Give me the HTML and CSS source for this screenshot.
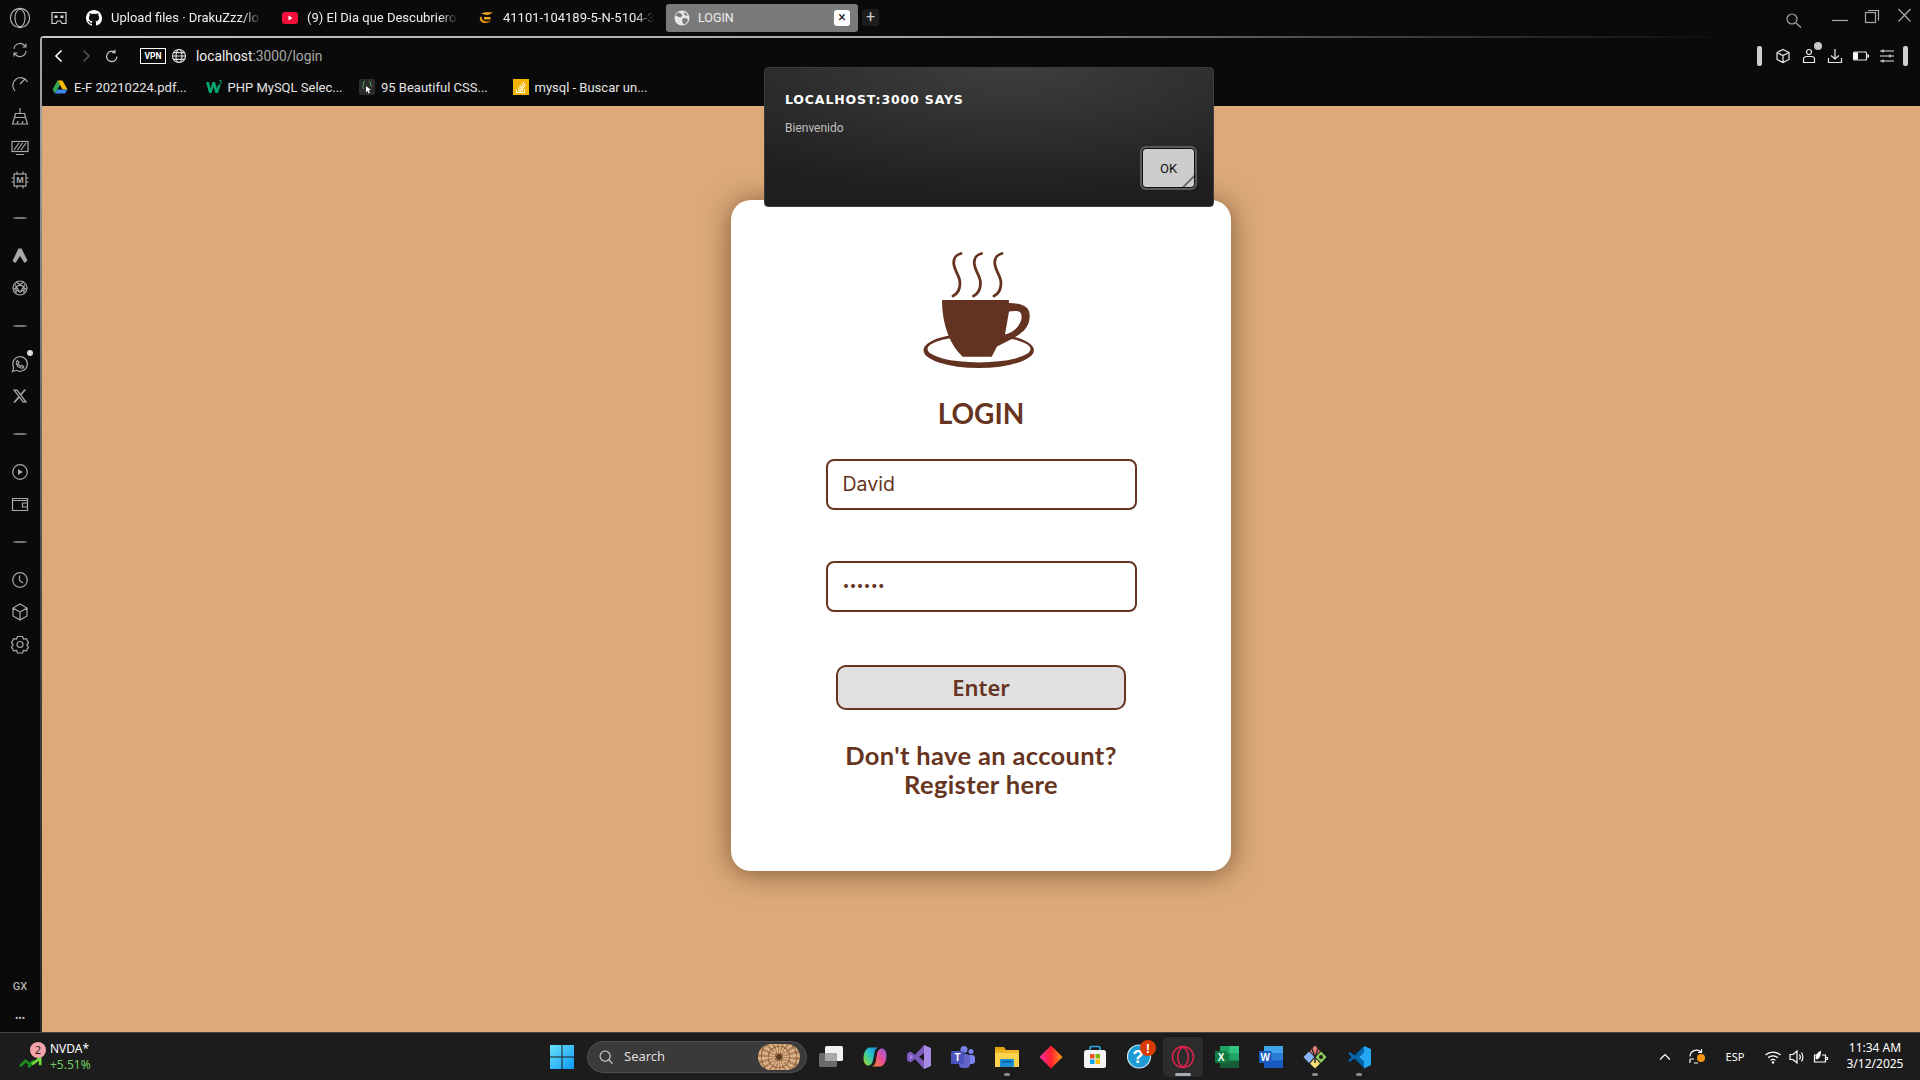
FILE: index.html
```html
<!DOCTYPE html>
<html lang="en">
<head>
<meta charset="utf-8">
<title>LOGIN</title>
<link rel="stylesheet" href="styles.css">
</head>
<body>
<div class="shell">
  <header class="tabstrip">
    <div class="brand"><svg class="i22" viewBox="0 0 24 24"><circle class="ln" cx="12" cy="12" r="10.5"/><ellipse class="ln" cx="12" cy="12" rx="5.5" ry="9.5"/></svg></div>
    <div class="workspace"><svg class="i16" viewBox="0 0 16 16"><path class="ln" d="M1 2.5h14v11h-4l-1.500-2.500h-3l-1.500 2.500h-4z"/><rect class="fl" x="3.500" y="5.500" width="3" height="2.500"/><rect class="fl" x="9.500" y="5.500" width="3" height="2.500"/></svg></div>
    <div class="tabs">
      <div class="tab"><svg class="i16" viewBox="0 0 16 16"><path class="white" d="M8 0C3.580 0 0 3.580 0 8c0 3.540 2.290 6.530 5.470 7.590.4.070.55-.17.55-.38 0-.19-.01-.82-.01-1.490-2.010.37-2.530-.49-2.690-.94-.09-.23-.48-.94-.82-1.130-.28-.15-.68-.52-.01-.53.63-.01 1.080.58 1.230.82.72 1.210 1.870.87 2.330.66.07-.52.28-.87.51-1.070-1.780-.2-3.640-.89-3.640-3.950 0-.87.31-1.590.82-2.150-.08-.2-.36-1.020.08-2.120 0 0 .67-.21 2.200.82.64-.18 1.320-.27 2-.27s1.360.09 2 .27c1.530-1.040 2.200-.82 2.200-.82.44 1.100.16 1.920.08 2.120.51.56.82 1.270.82 2.150 0 3.070-1.870 3.750-3.650 3.950.29.25.54.73.54 1.480 0 1.070-.01 1.930-.01 2.200 0 .21.15.46.55.38A8.013 8.013 0 0016 8c0-4.420-3.580-8-8-8z"/></svg><span class="tab-title">Upload files · DrakuZzz/lo</span></div>
      <div class="tab"><svg class="i16" viewBox="0 0 16 16"><rect x="0" y="2" width="16" height="12" rx="3" fill="#f0103a"/><path class="white" d="M6.500 5.500l4 2.500-4 2.500z"/></svg><span class="tab-title">(9) El Dia que Descubriero</span></div>
      <div class="tab"><svg class="i16" viewBox="0 0 16 16"><path d="M3 3.500c3-1.500 7-1.500 12-1l-5 2.500c-2.500-.5-5-.5-7-1.500z" fill="#f5a623"/><path d="M2 7c-1 4 2 6 5.500 6 2.500 0 4.500-1 5.500-2.500-2.500 1-6 1.500-8-.5-1-1-1.500-2-1-3.500z" fill="#e8900c"/><path d="M6 7h6.500v2.500H6z" fill="#f5a623"/></svg><span class="tab-title">41101-104189-5-N-5104-3</span></div>
      <div class="tab active"><svg class="i16" viewBox="0 0 16 16"><circle cx="8" cy="8" r="7.500" fill="#e8e8e8"/><path d="M4 2.500l3 1 1.500 2-2 2-3-1-2-1zM9 8l4 .5 1 2-3 4-2-1-1-3zM10 2l3 2 .5 2-3-1z" fill="#7a7a7a"/></svg><span class="tab-title plain">LOGIN</span><span class="tab-close">×</span></div>
      <div class="tab-new">+</div>
    </div>
    <div class="winctl">
      <svg class="wc-search" viewBox="0 0 24 36"><circle class="ln" cx="11" cy="19" r="5"/><path class="ln" d="M15 23l5 4.500"/></svg>
      <svg class="wc-min" viewBox="0 0 16 36"><path class="ln" d="M0 20.500h16"/></svg>
      <svg class="wc-max" viewBox="0 0 14 36"><rect class="ln" x=".5" y="12.500" width="10" height="10"/><path class="ln" d="M3 10.500h10.500v10"/></svg>
      <svg class="wc-close" viewBox="0 0 13 36"><path class="ln" d="M.5 9l12 12.500M12.500 9L.5 21.500"/></svg>
    </div>
  </header>

  <nav class="sidebar">
    <div class="sb-slot sb-first"><svg class="i18" viewBox="0 0 18 18"><path class="ln" d="M3 8a6 6 0 0 1 10.500-3.500L15 6M15 2.500V6h-3.500M15 10a6 6 0 0 1-10.500 3.500L3 12M3 15.500V12h3.500"/></svg></div>
    <div class="sb-slot"><svg class="i18" viewBox="0 0 18 18"><path class="ln" d="M4 16A7.800 7.800 0 1 1 16.500 7M9 9l5-5"/></svg></div>
    <div class="sb-slot"><svg class="i18" viewBox="0 0 18 18"><path class="ln" d="M9 1v5M4.500 6.500h9l1 4h-11zM3.500 10.500L1.500 17h15l-2-6.500M6 17l1-3M11 17l1-3"/></svg></div>
    <div class="sb-slot"><svg class="i18" viewBox="0 0 18 18"><rect class="ln" x="1" y="2.500" width="16" height="10"/><path class="ln" d="M3 11l5-7M6.500 11l5-7M10 11l5-7M5 15.500h8"/></svg></div>
    <div class="sb-slot"><svg class="i18" viewBox="0 0 18 18"><rect class="ln" x="3" y="3" width="12" height="12"/><path class="ln" d="M6 .5V3M12 .5V3M6 15v2.500M12 15v2.500M.5 7H3M.5 11H3M15 7h2.500M15 11h2.500"/><text class="chip-m" x="9" y="12.300">M</text></svg></div>
    <div class="sb-dash"></div>
    <div class="sb-slot"><svg class="i18" viewBox="0 0 18 18"><path class="fl" d="M7.500 1.500h3l6 12-3 2.500-4.500-7-4.500 7L1.500 14z"/></svg></div>
    <div class="sb-slot"><svg class="i18" viewBox="0 0 18 18"><circle class="ln" cx="9" cy="9" r="7"/><path class="ln" d="M5 3l8 5v6M13 3l-8 5v6M2.500 9l6.500 4 6.500-4M4 5.500l5 8M14 5.500l-5 8"/></svg></div>
    <div class="sb-dash"></div>
    <div class="sb-slot dotted"><svg class="i18" viewBox="0 0 18 18"><path class="ln" d="M1.500 16.500l1.200-4a7.300 7.300 0 1 1 2.800 2.800z"/><path class="ln" d="M6.500 5.500l1.500 2-1 1c.5 1.200 1.500 2.200 2.800 2.800l1-1 2 1.500c-.5 1.500-2 1.700-3.500 1-2-.8-3.500-2.300-4-4.300-.2-1 .5-2.500 1.200-3z"/></svg></div>
    <div class="sb-slot"><svg class="i16" viewBox="0 0 24 24"><path class="fl" d="M18.244 2.250h3.308l-7.227 8.260 8.502 11.240H16.170l-5.214-6.817L4.990 21.750H1.680l7.730-8.835L1.254 2.250H8.080l4.713 6.231zm-1.161 17.520h1.833L7.084 4.126H5.117z"/></svg></div>
    <div class="sb-dash"></div>
    <div class="sb-slot"><svg class="i18" viewBox="0 0 18 18"><circle class="ln" cx="9" cy="9" r="7.300"/><path class="fl" d="M7 6l5 3-5 3z"/></svg></div>
    <div class="sb-slot"><svg class="i18" viewBox="0 0 18 18"><path class="ln" d="M16.500 5.500v-2h-15v12h15v-3.500M1.500 5.500h15M16.500 8h-5v4h5zM16.500 5.500V8"/></svg></div>
    <div class="sb-dash"></div>
    <div class="sb-slot"><svg class="i18" viewBox="0 0 18 18"><circle class="ln" cx="9" cy="9" r="7.300"/><path class="ln" d="M8.500 4.500v5l3.500 2.500"/></svg></div>
    <div class="sb-slot"><svg class="i18" viewBox="0 0 18 18"><path class="ln" d="M9 1l7 4v8l-7 4-7-4V5zM2 5l7 4 7-4M9 9v8"/></svg></div>
    <div class="sb-slot"><svg class="i18" viewBox="0 0 18 18"><path class="ln" d="M6.500 1.500h5l1 2.500 2.800-.3 2.200 4-1.700 2 1.700 2.500-2.200 3.600-2.800-.3-1 2.500h-5l-1-2.500-2.800.3L.5 12.200l1.700-2.500-1.700-2 2.200-4 2.800.3z"/><circle class="ln" cx="9" cy="9.500" r="3"/></svg></div>
    <div class="sb-push"></div>
    <div class="sb-slot sb-gx">GX</div>
    <div class="sb-slot sb-more">•••</div>
  </nav>

  <div class="frame">
    <div class="toolbar">
      <div class="navrow">
        <span class="nav-btn back"><svg class="i14" viewBox="0 0 14 14"><path class="ln bright" d="M9.500 1.500L4 7l5.500 5.500"/></svg></span>
        <span class="nav-btn fwd"><svg class="i14" viewBox="0 0 14 14"><path class="ln dim" d="M4.500 1.500L10 7l-5.500 5.500"/></svg></span>
        <span class="nav-btn"><svg class="i14" viewBox="0 0 14 14"><path class="ln" d="M12 7.500a5.200 5.200 0 1 1-2-4.200M10 .8v2.800H7.300"/></svg></span>
        <span class="vpn">VPN</span>
        <svg class="i16 globe" viewBox="0 0 16 16"><circle class="ln" cx="8" cy="8" r="6.500"/><ellipse class="ln" cx="8" cy="8" rx="3" ry="6.500"/><path class="ln" d="M1.500 8h13M2.500 4.700h11M2.500 11.300h11"/></svg>
        <span class="url"><span class="url-host">localhost</span>:3000/login</span>
        <div class="tools">
          <span class="pill"></span>
          <span class="tool first"><svg class="i16" viewBox="0 0 16 16"><path class="ln" d="M8 1.500l6 3v7l-6 3-6-3v-7zM2 4.500l6 3 6-3M8 7.500v7"/></svg></span>
          <span class="tool badge-host"><svg class="i16" viewBox="0 0 16 16"><circle class="ln" cx="8" cy="4" r="2.500"/><path class="ln" d="M2.500 14.500V11c0-1.500 1.500-2.500 3-2.500h5c1.500 0 3 1 3 2.500v3.500z"/></svg></span>
          <span class="tool"><svg class="i16" viewBox="0 0 16 16"><path class="ln" d="M8 1v10M4 7.500L8 11l4-3.500M1.500 10v4.500h13V10"/></svg></span>
          <span class="tool"><svg class="i16" viewBox="0 0 16 16"><rect class="ln" x=".5" y="4" width="13" height="8" rx="1"/><rect class="white" x="1" y="4.500" width="4" height="7"/><path class="white" d="M14.500 6.500H16v3h-1.500z"/></svg></span>
          <span class="tool"><svg class="i16" viewBox="0 0 16 16"><path class="ln" d="M1 3h14M1 8h14M1 13h14M4 1.500v3M11 6.500v3M4 11.500v3"/></svg></span>
          <span class="pill last"></span>
        </div>
      </div>
      <div class="marks">
        <div class="mark"><svg class="i16" viewBox="0 0 16 16"><path d="M5.500 1.500h5l5 9h-5z" fill="#fbbc04"/><path d="M5.500 1.500L.5 10.500 3 14.500 8 6z" fill="#34a853"/><path d="M3 14.500h10l2.500-4H5.500z" fill="#4285f4"/></svg><span>E-F 20210224.pdf...</span></div>
        <div class="mark"><svg class="i16" viewBox="0 0 16 16"><path d="M0 3h3l1.500 7L6.500 3h2.500l2 7 1-4h2.500l-2.500 8h-2.500l-2-6.500L5.500 14H3z" fill="#04aa6d"/><path d="M13 1.500h2.500v.6l-1 1c.7.1 1 .5 1 1 0 .7-.6 1-1.300 1L13.200 5" class="wmark"/></svg><span>PHP MySQL Selec...</span></div>
        <div class="mark"><svg class="i16" viewBox="0 0 16 16"><rect width="16" height="16" rx="2" fill="#2b2b2b"/><path d="M6 2.500c-1.500 0-1.500 1-1.500 2.500S4 7 3 7.500c1 .5 1.500 1 1.500 2.500" class="bm-g"/><path d="M10 2.500c1.500 0 1.500 1 1.500 2.500s.5 2 1.500 2.500" class="bm-g"/><path d="M7 7l5 4-2.300.3 1.300 2.700-1.300.5-1.200-2.700L7 13.500z" fill="#fff"/></svg><span>95 Beautiful CSS...</span></div>
        <div class="mark"><svg class="i16" viewBox="0 0 16 16"><rect width="16" height="16" fill="#f4b400"/><path d="M3.500 10.500v3h8v-3M5 11.800h5M5.200 9.800l5 .6M5.800 8l4.800 1.400M6.700 6.200l4.400 2.400M8.300 4.500l3.400 3.200M10.300 3l2 4.400" class="so"/></svg><span>mysql - Buscar un...</span></div>
      </div>
    </div>
    <main class="page">
      <section class="card">
        <svg class="cup" viewBox="1 0 120 120">
          <g class="steam"><path d="M41 3.500C35 5 33 10 34 15C35 22 40 26 40 33C40 39 37 44 33 46"/><path d="M61.500 3.500C55.500 5 53.500 10 54.500 15C55.500 22 60.500 26 60.500 33C60.500 39 57.500 44 53.500 46"/><path d="M82 3.500C76 5 74 10 75 15C76 22 81 26 81 33C81 39 78 44 74 46"/></g>
          <path class="cup-fill" fill-rule="evenodd" d="M3.500 100.300a55.200 17.700 0 1 0 110.400 0a55.200 17.700 0 1 0-110.400 0zM7.500 99a50 13 0 0 0 103 0a51.500 13 0 0 0-103 0z"/>
          <path class="cup-fill" fill-rule="evenodd" d="M22 50H89L88.800 53C95 53 103 54 107 58C111 62 110.500 72 106 78C100 86 88 91 77 96.500L71.700 106.700H42.700C30 95 22 75 22 50zM89 61.500L85 84.500C92 83 97 79 100 73C102.500 68 102 63 99 61.500C96 60.700 92 61 89 61.500z"/>
        </svg>
        <h1 class="title">LOGIN</h1>
        <input class="field first-field" type="text" value="David" aria-label="User">
        <input class="field second-field" type="password" value="secret" aria-label="Password">
        <button class="enter" type="button">Enter</button>
        <a class="register" href="#">Don't have an account?<br>Register here</a>
      </section>
    </main>
  </div>

  <footer class="taskbar">
    <div class="tb-left">
      <div class="stock"><svg class="stock-chart" viewBox="0 0 24 14"><path d="M0 10l6-6 5 4 4-4" class="st-a"/><path d="M9 11l6-6" class="st-a"/><path d="M13 8l9-7v8" class="st-b"/></svg><span class="stock-badge">2</span></div>
      <div class="stock-text"><div class="stock-name">NVDA*</div><div class="stock-val">+5.51%</div></div>
    </div>
    <div class="tb-center">
      <span class="slot"><svg class="i24" viewBox="0 0 24 24"><defs><linearGradient id="win" x1="0" y1="0" x2="1" y2="1"><stop offset="0" stop-color="#6be3fb"/><stop offset="1" stop-color="#0b98f5"/></linearGradient></defs><path fill="url(#win)" d="M0 0h11.500v11.500H0zM12.500 0H24v11.500H12.500zM0 12.500h11.500V24H0zM12.500 12.500H24V24H12.500z"/></svg></span>
      <div class="search"><svg class="i14" viewBox="0 0 16 16"><circle class="ln" cx="7" cy="7" r="5.800"/><path class="ln" d="M11 11l4.500 4.500"/></svg><span class="search-text">Search</span><span class="search-art"></span></div>
      <span class="slot"><svg class="i24" viewBox="0 0 24 24"><rect x="0" y="8" width="18" height="14" rx="1.500" fill="#6a6a6a"/><rect x="6" y="1" width="18" height="15" rx="1.500" fill="#f1f1f1"/><rect x="6" y="8" width="12" height="8" fill="#a8a8a8"/></svg></span>
      <span class="slot"><svg class="i24" viewBox="0 0 24 24"><defs><linearGradient id="cp1" x1="1" y1="0" x2="0" y2="1"><stop offset="0" stop-color="#1f7ff0"/><stop offset=".45" stop-color="#27c4c8"/><stop offset=".8" stop-color="#6fd25a"/><stop offset="1" stop-color="#f8d23a"/></linearGradient><linearGradient id="cp2" x1="1" y1="0" x2="0" y2="1"><stop offset="0" stop-color="#8a5cf0"/><stop offset=".5" stop-color="#ee4f8e"/><stop offset="1" stop-color="#f88a2a"/></linearGradient></defs><path fill="url(#cp1)" d="M7 2.500h8c-2 .5-3 2.500-3.500 5L10 15c-.6 3-2 5.500-4.500 5.500C3 20.500.5 18 .5 13.500.5 8 3 2.500 7 2.500z"/><path fill="url(#cp2)" d="M17 21.500H9c2-.5 3.200-2.500 3.800-5L14 9c.6-3 2-5.500 4.500-5.500 2.500 0 5 2.500 5 7 0 5.500-2.500 11-6.500 11z"/></svg></span>
      <span class="slot"><svg class="i24" viewBox="0 0 24 24"><path fill="#7d5bbd" d="M17 0L8 10 3.500 6.500 0 8.500v7L3.500 17.500 8 14l9 10z"/><path fill="#a98ae6" d="M17 0l7 3v18l-7 3zM3 9.500L6 12l-3 2.500z"/><path fill="#1c1c1c" d="M17 8l-5 4 5 4z"/></svg></span>
      <span class="slot"><svg class="i24" viewBox="0 0 24 24"><circle cx="20" cy="6.500" r="2.500" fill="#7b83eb"/><rect x="15" y="10" width="9" height="9" rx="3" fill="#7b83eb"/><circle cx="13" cy="4.500" r="3.500" fill="#7b83eb"/><rect x="8" y="9" width="11" height="14" rx="4" fill="#6264c9"/><rect x="0" y="6" width="13" height="13" rx="1.500" fill="#4b53bc"/><text class="tb-t" x="6.500" y="16.200">T</text></svg></span>
      <span class="slot running"><svg class="i24" viewBox="0 0 24 24"><path fill="#e0a60e" d="M0 2h9l2 3h13v6H0z"/><rect x="0" y="5" width="24" height="17" fill="#fcd34d"/><path fill="#f0b429" d="M0 5h24v3H0z"/><rect x="5" y="14" width="14" height="8" rx="1" fill="#1b8fd6"/><rect x="7" y="16" width="10" height="1.500" fill="#0a5ea0"/></svg></span>
      <span class="slot"><svg class="i24" viewBox="0 0 24 24"><defs><linearGradient id="dm" x1="0" y1="0" x2="1" y2="0"><stop offset="0" stop-color="#ff2ea6"/><stop offset=".5" stop-color="#ff1f2d"/><stop offset="1" stop-color="#ffa01f"/></linearGradient></defs><path fill="url(#dm)" d="M12 .5l11.500 11.500L12 23.500.5 12z"/></svg></span>
      <span class="slot"><svg class="i24" viewBox="0 0 24 24"><path class="store-h" d="M7 5V3c0-1 1-1.500 2-1.500h6c1 0 2 .5 2 1.500v2"/><rect x="1" y="5" width="22" height="18" rx="2.500" fill="#f4f4f4"/><rect x="7" y="9" width="4.500" height="4.500" fill="#f25022"/><rect x="12.500" y="9" width="4.500" height="4.500" fill="#7fba00"/><rect x="7" y="14.500" width="4.500" height="4.500" fill="#00a4ef"/><rect x="12.500" y="14.500" width="4.500" height="4.500" fill="#ffb900"/></svg></span>
      <span class="slot"><svg class="help" viewBox="0 0 30 30"><circle cx="15" cy="14.500" r="11.500" fill="#1d9ad6" stroke="#cfe8f5" stroke-width="1.200"/><text class="tb-q" x="14" y="21">?</text><circle cx="24" cy="6" r="8" fill="#d83b01"/><text class="tb-ex" x="24" y="10.500">!</text></svg></span>
      <span class="slot selected"><svg class="i24" viewBox="0 0 24 24"><circle class="op" cx="12" cy="12" r="10.500"/><ellipse class="op" cx="12" cy="12" rx="5.200" ry="9.500"/></svg></span>
      <span class="slot"><svg class="i24" viewBox="0 0 24 24"><rect x="5" y="1" width="19" height="22" rx="1" fill="#21a366"/><rect x="14.500" y="1" width="9.500" height="7.300" fill="#33c481"/><rect x="5" y="8.300" width="9.500" height="7.300" fill="#107c41"/><rect x="14.500" y="15.600" width="9.500" height="7.400" fill="#185c37"/><rect x="5" y="15.600" width="9.500" height="7.400" fill="#185c37"/><rect x="0" y="6" width="12" height="12" rx="1" fill="#107c41"/><text class="tb-t" x="6" y="15.800">X</text></svg></span>
      <span class="slot"><svg class="i24" viewBox="0 0 24 24"><rect x="5" y="1" width="19" height="22" rx="1" fill="#2b7cd3"/><rect x="5" y="1" width="19" height="7" fill="#41a5ee"/><rect x="5" y="15.500" width="19" height="7.500" fill="#185abd"/><rect x="0" y="6" width="12.500" height="12" rx="1" fill="#185abd"/><text class="tb-t" x="6.200" y="15.800">W</text></svg></span>
      <span class="slot running"><svg class="i24" viewBox="0 0 24 24"><path fill="#8ab4f8" d="M6 6.500l5.500 5.500L6 18 .5 12z"/><path fill="#8fce5a" d="M18 6.500l5.500 5.500-5.500 6-5.500-6z"/><path fill="#f07f7a" d="M12 .5l5 5.500-5 5.500-5-5.500z"/><path fill="#f7e07a" d="M12 13l5 5.500-5 5-5-5z"/><path class="gk" d="M8.500 2.500l3.500 9.500 3.500-9.500M12 12v6"/><circle cx="18" cy="12" r="2" fill="#1c1c1c"/></svg></span>
      <span class="slot running"><svg class="i24" viewBox="0 0 24 24"><path fill="#0065a9" d="M1 8.500l2-1.500 4.500 3.500L17 1v6.500l-5 4.500 5 4.500V23L7.500 13.500 3 17l-2-1.500 3.500-3.500z"/><path fill="#23a7f2" d="M17 1l7 3v16l-7 3.500V16.500L12 12l5-4.500z"/></svg></span>
    </div>
    <div class="tb-right">
      <span class="tray w30"><svg class="i14" viewBox="0 0 14 14"><path class="ln white-ln" d="M2 9.500l5-5 5 5"/></svg></span>
      <span class="tray w30 sync"><svg class="i18" viewBox="0 0 18 18"><path class="ln white-ln" d="M2 8.500a6.500 6.500 0 0 1 11-4.500M13.500 1v3.500H10M2 11h4M2 11v4M6 15h4"/></svg><i class="sync-dot"></i></span>
      <span class="tray esp">ESP</span>
      <span class="tray w24"><svg class="i16" viewBox="0 0 16 16"><path class="ln white-ln" d="M.5 6a11 11 0 0 1 15 0M3 8.800a7.500 7.500 0 0 1 10 0M5.500 11.400a3.800 3.800 0 0 1 5 0"/><circle class="white" cx="8" cy="13.500" r="1.200"/></svg></span>
      <span class="tray w24"><svg class="i16" viewBox="0 0 16 16"><path class="ln white-ln" d="M1 5.500h3l4-3.500v12L4 10.500H1zM10.500 5.500c1 1.500 1 3.500 0 5M12.500 3.500c1.800 2.500 1.800 6.500 0 9"/></svg></span>
      <span class="tray w24"><svg class="i16" viewBox="0 0 16 16"><path class="ln white-ln" d="M4 6H1.500v7h11V6H9M12.500 8.500h2v2h-2"/><path class="white" d="M2.500 10c0-4 2-7 5.500-8.500C8 5.500 7 9 5 10c-.8.300-1.700.3-2.500 0z"/></svg></span>
      <div class="clock"><div>11:34 AM</div><div>3/12/2025</div></div>
    </div>
  </footer>

  <div class="dialog" role="alertdialog">
    <div class="dlg-title">LOCALHOST:3000 SAYS</div>
    <div class="dlg-msg">Bienvenido</div>
    <button class="dlg-ok" type="button">OK</button>
  </div>
</div>
</body>
</html>
```

FILE: styles.css
```css
* { box-sizing: border-box; }
html, body { margin: 0; height: 100%; overflow: hidden; }
body { background: #0a0a0a; color: #ddd; font-family: Roboto, "Liberation Sans", sans-serif; }

.shell {
  position: relative;
  width: 1920px; height: 1080px;
  display: grid;
  grid-template-columns: 40px 1fr;
  grid-template-rows: 36px 1fr 48px;
}

svg { display: block; flex: none; overflow: visible; }
.i14 { width: 14px; height: 14px; }
.i16 { width: 16px; height: 16px; }
.i18 { width: 18px; height: 18px; }
.i22 { width: 22px; height: 22px; }
.i24 { width: 24px; height: 24px; }
.ln { fill: none; stroke: currentColor; stroke-width: 1.2; }
.fl { fill: currentColor; }
.white { fill: #fff; }
.white-ln { stroke: #fff; }
.bright { stroke: #fff; stroke-width: 1.6; }
.dim { stroke: #555; stroke-width: 1.5; }

/* tab strip */
.tabstrip { grid-column: 1 / -1; display: flex; align-items: stretch; color: #b8b8b8; }
.brand { width: 40px; display: flex; align-items: center; justify-content: center; color: #bbb; }
.workspace { width: 38px; display: flex; align-items: center; justify-content: center; color: #d5d5d5; }
.tabs { display: flex; gap: 4px; padding-top: 4px; height: 32px; box-sizing: content-box; }
.tab { width: 192px; height: 28px; padding: 0 8px; display: flex; align-items: center; gap: 9px; border-radius: 3px; font-size: 13px; color: #eee; }
.tab-title { flex: 1; padding-bottom: 2px; white-space: nowrap; -webkit-mask-image: linear-gradient(90deg, #000 88%, transparent); mask-image: linear-gradient(90deg, #000 88%, transparent); }
.tab-title.plain { -webkit-mask-image: none; mask-image: none; }
.tab.active { background: #7a7a7a; gap: 8px; font-size: 12.5px; }
.tab-close { width: 16px; height: 16px; background: #fff; border-radius: 3px; color: #222; font-size: 14px; line-height: 15px; text-align: center; }
.tab-new { width: 17px; height: 17px; margin: 5px 0 0 0; background: #1c1c1c; border-radius: 3px; color: #ccc; font-size: 16px; line-height: 16px; text-align: center; }
.winctl { margin-left: auto; display: flex; padding-right: 9px; color: #a8a8a8; }
.winctl svg { height: 36px; }
.wc-search { width: 24px; }
.wc-min { width: 16px; margin-left: 27px; }
.wc-max { width: 14px; margin-left: 17px; }
.wc-close { width: 13px; margin-left: 19px; }

/* sidebar */
.sidebar { display: flex; flex-direction: column; margin-bottom: -2px; color: #a9a9a9; }
.sb-slot { height: 32px; flex: none; display: flex; align-items: center; justify-content: center; position: relative; }
.sb-first { height: 28px; margin-bottom: 4px; }
.sb-dash { height: 44px; flex: none; display: flex; align-items: center; justify-content: center; }
.sb-dash::before { content: ""; width: 16px; height: 2px; background: linear-gradient(90deg, transparent, #777 25%, #777 75%, transparent); }
.sb-push { flex: 1; }
.sb-gx { font-size: 11px; font-weight: 500; color: #b0b0b0; }
.sb-more { font-size: 10px; letter-spacing: 0; color: #c0c0c0; }
.dotted::after { content: ""; position: absolute; top: 2px; right: 7px; width: 6px; height: 6px; border-radius: 50%; background: #ddd; }
.chip-m { font: 700 9px "Liberation Sans", sans-serif; fill: currentColor; text-anchor: middle; }

/* browser frame */
.frame {
  display: flex; flex-direction: column; min-height: 0;
  padding: 2px 0 0 2px;
  border-top-left-radius: 4px;
  background:
    linear-gradient(90deg, #c8c8c8, #a8a8a8 45%, #444 70%, #0a0a0a 90%) top / 100% 2px no-repeat,
    linear-gradient(180deg, #aaa, #444 60%, #2a2a2a) left / 2px 100% no-repeat;
}
.toolbar { height: 68px; flex: none; background: #0a0a0a; color: #c8c8c8; }
.navrow { height: 36px; display: flex; align-items: center; padding-left: 2px; }
.nav-btn { width: 26px; display: flex; justify-content: center; }
.nav-btn.back { width: 29px; }
.vpn { width: 26px; height: 16px; margin-left: 15px; border: 1px solid #fff; font: 700 8.5px/14px Roboto, sans-serif; color: #fff; text-align: center; }
.globe { margin-left: 5px; color: #ddd; }
.url { margin-left: 9px; font-size: 13.8px; color: #a8a8a8; }
.url-host { color: #f0f0f0; }
.tools { margin-left: auto; display: flex; align-items: center; color: #e8e8e8; padding-right: 12px; }
.tool { width: 26px; display: flex; justify-content: center; position: relative; }
.tool.first { margin-left: 8px; }
.pill { width: 5px; height: 20px; border-radius: 2px; background: #cfcfcf; }
.pill.last { margin-left: 3px; }
.badge-host::after { content: ""; position: absolute; right: 0; top: -6px; width: 8px; height: 8px; border-radius: 50%; background: #c8c8c8; }
.marks { height: 32px; padding: 0 0 6px 10px; display: flex; align-items: center; }
.mark { width: 153.5px; display: flex; align-items: center; gap: 6px; font-size: 13px; color: #e4e4e4; white-space: nowrap; }
.wmark { fill: none; stroke: #04aa6d; stroke-width: .8; }
.bm-g { fill: none; stroke: #4caf50; stroke-width: 1; }
.so { fill: none; stroke: #fff; stroke-width: 1; }

/* page */
.page { flex: 1; min-height: 0; background: #dcaa78; display: flex; justify-content: center; align-items: flex-start; }
.card {
  width: 500px; margin-top: 94px; padding: 50px 0 72px;
  background: #fff; border-radius: 20px;
  box-shadow: 0 2px 28px rgba(60, 35, 15, .6);
  display: flex; flex-direction: column; align-items: center;
  color: #663420;
}
.cup { width: 120px; height: 120px; }
.cup-fill { fill: #643220; }
.steam path { fill: none; stroke: #643220; stroke-width: 2.8; stroke-linecap: round; }
.title { margin: 26px 0 0; font: 700 28px/34px Lato, sans-serif; }
.field {
  width: 311px; height: 51px; padding: 0 15px 2px;
  border: 2px solid #663420; border-radius: 8px; outline: none; background: #fff;
  font: 400 19.500px Inter, sans-serif; color: #663420;
}
.first-field { margin-top: 29px; }
.second-field { margin-top: 51px; font-size: 12.500px; padding-bottom: 3px; }
.enter {
  width: 290px; height: 45px; margin-top: 53px; padding: 0 0 2px;
  background: #e0e0e0; border: 2px solid #663420; border-radius: 10px;
  font: 600 22px "Noto Sans", sans-serif; color: #663420;
}
.register { margin-top: 31px; font: 700 25.500px/29px Lato, sans-serif; letter-spacing: .35px; color: #663420; text-align: center; text-decoration: none; }

/* alert */
.dialog {
  position: absolute; left: 764px; top: 67px;
  width: 450px; height: 140px; padding: 24px 16px 16px 20px;
  display: flex; flex-direction: column;
  border: 1px solid #3c3c3c; border-radius: 4px;
  background: radial-gradient(ellipse 95% 95% at 55% 0, #3e3e3e, #1e1e1e 100%);
}
.dlg-title { font: 700 12.500px/16px "DejaVu Sans", sans-serif; letter-spacing: .85px; color: #fff; white-space: nowrap; }
.dlg-msg { margin-top: 12px; font: 400 12px/16px Roboto, sans-serif; color: #c0c0c0; }
.dlg-ok {
  margin-top: auto; align-self: flex-end;
  width: 53px; height: 40px; margin-right: 2px; margin-bottom: 2px; padding: 0;
  border: 1px solid #111; border-radius: 4px; outline: 2px solid #5a5a5a;
  background: linear-gradient(135deg, transparent 86%, #666 87%, #666 89%, transparent 90%), #cdcdcd;
  font: 400 13px Roboto, sans-serif; color: #111;
}

/* taskbar */
.taskbar { grid-column: 1 / -1; display: grid; grid-template-columns: 540px auto 1fr; align-items: center; background: #1c1c1c; border-top: 1px solid #444; color: #fff; }
.tb-left { display: flex; align-items: center; padding-left: 20px; gap: 8px; }
.stock { width: 22px; height: 30px; position: relative; }
.stock-chart { position: absolute; left: 0; bottom: 2px; width: 22px; height: 13px; }
.st-a { fill: none; stroke: #1f8a24; stroke-width: 3; }
.st-b { fill: none; stroke: #6fd83a; stroke-width: 3; }
.stock-badge { position: absolute; left: 10px; top: 0; width: 16px; height: 16px; border-radius: 50%; background: #f5a3ab; color: #222; font: 400 11px/16px "Noto Sans", sans-serif; text-align: center; }
.stock-text { font: 400 12px/16px "Noto Sans", sans-serif; }
.stock-val { color: #6ccb5f; }
.tb-center { display: flex; align-items: center; }
.slot { width: 44px; height: 40px; display: flex; align-items: center; justify-content: center; position: relative; }
.slot.running::after, .slot.selected::after { content: ""; position: absolute; bottom: 1px; left: 50%; width: 6px; height: 3px; margin-left: -3px; border-radius: 2px; background: #8a8a8a; }
.slot.selected { width: 40px; margin: 0 2px; background: #2c2c2c; border-radius: 5px; }
.slot.selected::after { width: 16px; margin-left: -8px; background: #a5adb3; }
.help { width: 30px; height: 30px; }
.store-h { fill: none; stroke: #27a9e1; stroke-width: 1.6; }
.op { fill: none; stroke: #e0234e; stroke-width: 1.500; }
.gk { fill: none; stroke: #2a2a2a; stroke-width: 1.500; }
.tb-t { font: 700 10px "Liberation Sans", sans-serif; fill: #fff; text-anchor: middle; }
.tb-q { font: 700 18px "Liberation Sans", sans-serif; fill: #fff; text-anchor: middle; }
.tb-ex { font: 700 13px "Liberation Sans", sans-serif; fill: #fff; text-anchor: middle; }
.search { width: 220px; height: 32px; margin: 0 2px 0 3px; padding: 0 6px 0 11px; display: flex; align-items: center; gap: 11px; background: #3a3a3a; border: 1px solid #505050; border-radius: 16px; color: #ddd; }
.search-text { font: 400 13px "Noto Sans", sans-serif; padding-bottom: 2px; }
.search-art {
  margin-left: auto; width: 42px; height: 26px; border-radius: 13px;
  background:
    radial-gradient(circle at 50% 50%, #5a3a20 0 2.500px, transparent 3.500px),
    repeating-radial-gradient(circle at 50% 50%, transparent 0 3px, rgba(120, 80, 45, .55) 3px 4.500px, transparent 4.500px 7px),
    repeating-conic-gradient(at 50% 50%, #d9b48a 0 10deg, #b8865a 10deg 20deg);
}
.tb-right { display: flex; align-items: center; justify-content: flex-end; padding-right: 5px; }
.tray { display: flex; align-items: center; justify-content: center; position: relative; }
.w30 { width: 30px; }
.w24 { width: 24px; }
.sync { margin: 0 6px 0 2px; }
.sync-dot { position: absolute; left: 15px; top: 6px; width: 8px; height: 8px; border-radius: 50%; background: #f7930f; }
.esp { width: 34px; margin-right: 9px; font: 400 11px "Noto Sans", sans-serif; }
.clock { width: 80px; margin: 0 0 2px 2px; font: 400 12px/16px "Noto Sans", sans-serif; text-align: center; }
```
